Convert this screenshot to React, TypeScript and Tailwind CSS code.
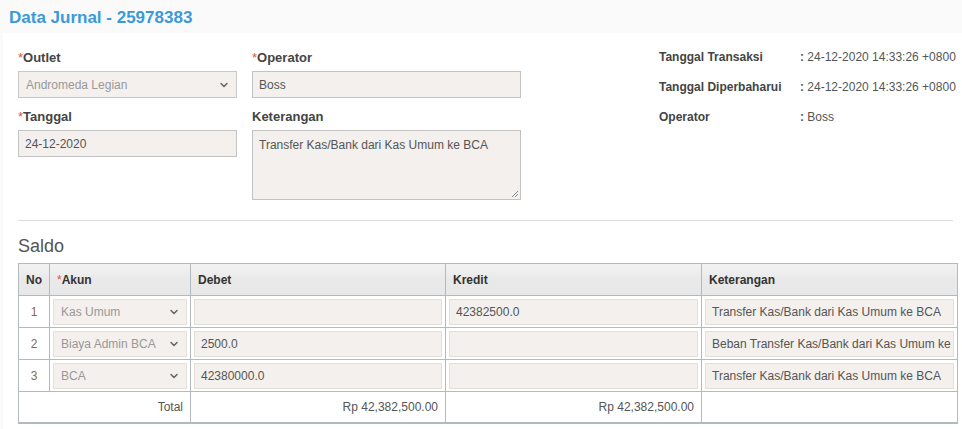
import { ChevronDown } from 'lucide-react'

const rows = [
  { no: 1, akun: 'Kas Umum', debet: '', kredit: '42382500.0', ket: 'Transfer Kas/Bank dari Kas Umum ke BCA' },
  { no: 2, akun: 'Biaya Admin BCA', debet: '2500.0', kredit: '', ket: 'Beban Transfer Kas/Bank dari Kas Umum ke BCA' },
  { no: 3, akun: 'BCA', debet: '42380000.0', kredit: '', ket: 'Transfer Kas/Bank dari Kas Umum ke BCA' },
]

const info = [
  { label: 'Tanggal Transaksi', value: '24-12-2020 14:33:26 +0800' },
  { label: 'Tanggal Diperbaharui', value: '24-12-2020 14:33:26 +0800' },
  { label: 'Operator', value: 'Boss' },
]

function Label({ text, required }: { text: string; required?: boolean }) {
  return (
    <div className="h-[26px] text-[13px] font-bold leading-[26px] text-[#444]">
      {required && <span className="font-normal text-[#d9534f]">*</span>}
      {text}
    </div>
  )
}

function Select({ value, className }: { value: string; className: string }) {
  return (
    <div className={`flex items-center justify-between border bg-[#f3f0ed] pl-[7px] pr-[6px] text-[#999] ${className}`}>
      <span className="whitespace-nowrap">{value}</span>
      <ChevronDown className="h-[12px] w-[12px] text-[#666]" strokeWidth={3} />
    </div>
  )
}

export default function App() {
  return (
    <div className="h-[429px] w-[962px] overflow-hidden bg-[#fafafa] font-['Liberation_Sans',Arial,sans-serif]">
      <h1 className="h-[33px] pl-[9px] pt-[8px] text-[17px] font-bold leading-[20px] text-[#3a9ad9]">
        Data Jurnal - 25978383
      </h1>

      <div className="ml-[3px] h-[396px] bg-white pl-[15px] pr-[5px] pt-[12px]">
        <div className="flex">
          <div className="w-[219px]">
            <Label text="Outlet" required />
            <Select value="Andromeda Legian" className="h-[27px] border-[#c8c8c8] text-[12px]" />
            <div className="h-[6px]" />
            <Label text="Tanggal" required />
            <div className="flex h-[27px] items-center border border-[#c3c3c3] bg-[#f3f0ed] pl-[6px] text-[12px] text-[#555]">
              24-12-2020
            </div>
          </div>

          <div className="ml-[15px] w-[269px]">
            <Label text="Operator" required />
            <div className="flex h-[27px] items-center border border-[#c3c3c3] bg-[#f3f0ed] pl-[6px] text-[12px] text-[#555]">
              Boss
            </div>
            <div className="h-[6px]" />
            <Label text="Keterangan" />
            <div className="relative h-[70px] border border-[#c3c3c3] bg-[#f3f0ed] pl-[6px] pt-[5px] text-[12px] text-[#555]">
              Transfer Kas/Bank dari Kas Umum ke BCA
              <svg className="absolute bottom-[1px] right-[1px]" width="8" height="8" viewBox="0 0 8 8">
                <path d="M7 1 1 7M7 4 4 7" stroke="#888" strokeWidth="1" />
              </svg>
            </div>
          </div>

          <div className="ml-[138px] flex flex-col gap-[12px] pt-[3px]">
            {info.map((item) => (
              <div key={item.label} className="flex h-[18px] items-center text-[12px]">
                <span className="w-[141px] font-bold text-[#444]">{item.label}</span>
                <span className="whitespace-nowrap text-[#555]">
                  <span className="font-bold">:</span> {item.value}
                </span>
              </div>
            ))}
          </div>
        </div>

        <div className="mt-[20px] mr-[4px] border-t border-[#ddd]" />

        <div className="pt-[14px] text-[18px] leading-[22px] text-[#555]">Saldo</div>

        <table className="mt-[6px] w-[939px] table-fixed border-collapse border-b-2 border-b-[#b3babd] text-[12px]">
          <colgroup>
            <col className="w-[31px]" />
            <col className="w-[141px]" />
            <col className="w-[255px]" />
            <col className="w-[256px]" />
            <col className="w-[256px]" />
          </colgroup>
          <thead>
            <tr className="h-[32px] bg-gradient-to-b from-[#f2f2f2] via-[#e9e9e9] to-[#e8e8e8] text-left font-bold text-[#333]">
              <th className="border border-[#b3babd] px-[6px] text-center">No</th>
              <th className="border border-[#b3babd] px-[7px]">
                <span className="font-normal text-[#d9534f]">*</span>Akun
              </th>
              <th className="border border-[#b3babd] px-[7px]">Debet</th>
              <th className="border border-[#b3babd] px-[7px]">Kredit</th>
              <th className="border border-[#b3babd] px-[7px]">Keterangan</th>
            </tr>
          </thead>
          <tbody>
            {rows.map((row) => (
              <tr key={row.no} className="h-[32px]">
                <td className="border border-[#b3babd] text-center text-[#8a6d3b]">{row.no}</td>
                <td className="border border-[#b3babd] px-[3px]">
                  <Select value={row.akun} className="h-[26px] border-[#e3dfdb] text-[12px]" />
                </td>
                <td className="border border-[#b3babd] px-[3px]">
                  <div className="flex h-[26px] items-center border border-[#e3dfdb] bg-[#f3f0ed] pl-[6px] text-[#555]">
                    {row.debet}
                  </div>
                </td>
                <td className="border border-[#b3babd] px-[3px]">
                  <div className="flex h-[26px] items-center border border-[#e3dfdb] bg-[#f3f0ed] pl-[6px] text-[#555]">
                    {row.kredit}
                  </div>
                </td>
                <td className="border border-[#b3babd] px-[3px]">
                  <div className="flex h-[26px] items-center overflow-hidden whitespace-nowrap border border-[#e3dfdb] bg-[#f3f0ed] pl-[6px] text-[#555]">
                    {row.ket}
                  </div>
                </td>
              </tr>
            ))}
            <tr className="h-[31px] text-[#555]">
              <td colSpan={2} className="border border-[#b3babd] px-[7px] text-right">Total</td>
              <td className="border border-[#b3babd] px-[7px] text-right">Rp 42,382,500.00</td>
              <td className="border border-[#b3babd] px-[7px] text-right">Rp 42,382,500.00</td>
              <td className="border border-[#b3babd]" />
            </tr>
          </tbody>
        </table>
      </div>
    </div>
  )
}
